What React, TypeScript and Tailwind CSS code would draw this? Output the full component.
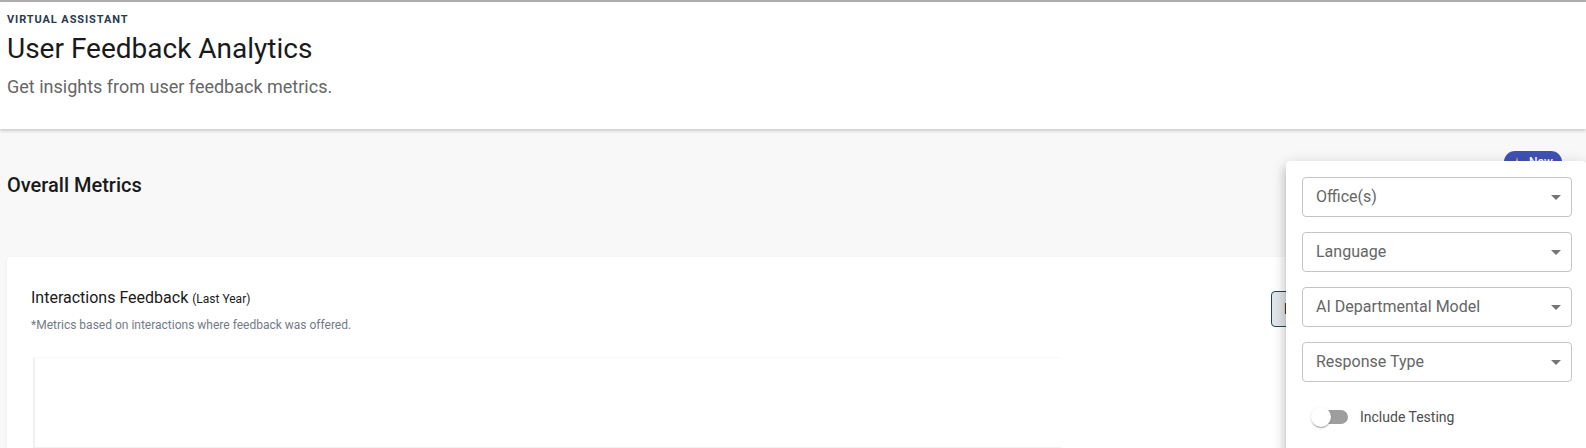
import React from "react";

const Arrow = () => (
  <svg width="10" height="5" viewBox="0 0 10 5" className="shrink-0">
    <path d="M0 0 L5 5 L10 0 Z" fill="#757575" />
  </svg>
);

const Select = ({ label }: { label: string }) => (
  <div className="flex h-[40px] w-[270px] items-center justify-between rounded-[4px] border border-[#c4c4c4] pl-[13px] pr-[10px]">
    <span className="text-[16px] leading-[24px] text-[#666666]">{label}</span>
    <Arrow />
  </div>
);

export default function App() {
  return (
    <div className="relative min-h-screen overflow-hidden bg-[#f8f8f8] font-['Roboto',sans-serif]">
      <div className="h-[2px] bg-[#adadad]" />
      <header className="relative z-10 h-[127px] bg-white px-[7px] pt-[10px] shadow-[0_2px_3px_rgba(0,0,0,0.18)]">
        <div className="text-[11px] font-bold uppercase leading-[16px] tracking-[0.9px] text-[#283b4d]">
          Virtual Assistant
        </div>
        <h1 className="mt-[3px] text-[28px] leading-[36px] text-[#1a1a1a]">User Feedback Analytics</h1>
        <p className="mt-[6px] text-[18px] leading-[28px] text-[#666666]">Get insights from user feedback metrics.</p>
      </header>

      <main className="px-[7px]">
        <div className="flex items-start justify-between pt-[22px] pr-[17px]">
          <h2 className="mt-[20px] text-[20px] font-medium leading-[28px] text-[#1a1a1a]">Overall Metrics</h2>
          <div className="flex h-[22px] w-[58px] items-center gap-[7px] rounded-full bg-[#3f51b5] pl-[8px]">
            <svg width="10" height="10" viewBox="0 0 10 10">
              <path d="M5 0 L6 4 L10 5 L6 6 L5 10 L4 6 L0 5 L4 4 Z" fill="#f4c430" />
            </svg>
            <span className="text-[12px] font-medium text-white">New</span>
          </div>
        </div>

        <section className="mt-[58px] h-[300px] rounded-[4px] bg-white px-[24px] pt-[29px] shadow-[0_1px_3px_rgba(0,0,0,0.06)]">
          <div className="flex items-start justify-between">
            <div>
              <div className="text-[16px] leading-[24px] text-[#1a1a1a]">
                Interactions Feedback <span className="text-[12px]">(Last Year)</span>
              </div>
              <div className="mt-[6px] text-[12px] leading-[16px] text-[#737b88]">
                *Metrics based on interactions where feedback was offered.
              </div>
            </div>
            <button className="mt-[5px] flex h-[36px] w-[284px] items-center rounded-[4px] border-[1.5px] border-[#1e4655] bg-[#e2e6ea] pl-[12px] text-[14px] font-medium text-[#1e2b33]">
              Export
            </button>
          </div>
          <div className="mt-[24px] ml-[2px] flex h-[93px] w-[1028px] flex-col border-l-[2px] border-t border-l-[#f0f0f0] border-t-[#f8f8f8]">
            <div className="flex-1" />
            <div className="h-[3px] bg-[#f2f2f2]" />
          </div>
        </section>
      </main>

      <div className="absolute left-[1286px] top-[161px] z-20 h-[320px] w-[300px] rounded-[4px] bg-white pl-[16px] pt-[16px] shadow-[0_5px_5px_-3px_rgba(0,0,0,0.2),0_8px_10px_1px_rgba(0,0,0,0.14),0_3px_14px_2px_rgba(0,0,0,0.12)]">
        <div className="flex flex-col gap-[15px]">
          <Select label="Office(s)" />
          <Select label="Language" />
          <Select label="AI Departmental Model" />
          <Select label="Response Type" />
        </div>
        <div className="mt-[16px] flex h-[38px] items-center">
          <div className="relative h-[38px] w-[58px]">
            <div className="absolute left-[12px] top-[12px] h-[14px] w-[34px] rounded-full bg-[#9e9e9e]" />
            <div className="absolute left-[9px] top-[9px] h-[20px] w-[20px] rounded-full bg-white shadow-[0_2px_1px_-1px_rgba(0,0,0,0.2),0_1px_1px_0_rgba(0,0,0,0.14),0_1px_3px_0_rgba(0,0,0,0.12)]" />
          </div>
          <span className="text-[14px] leading-[20px] text-[#4d4d4d]">Include Testing</span>
        </div>
      </div>
    </div>
  );
}
